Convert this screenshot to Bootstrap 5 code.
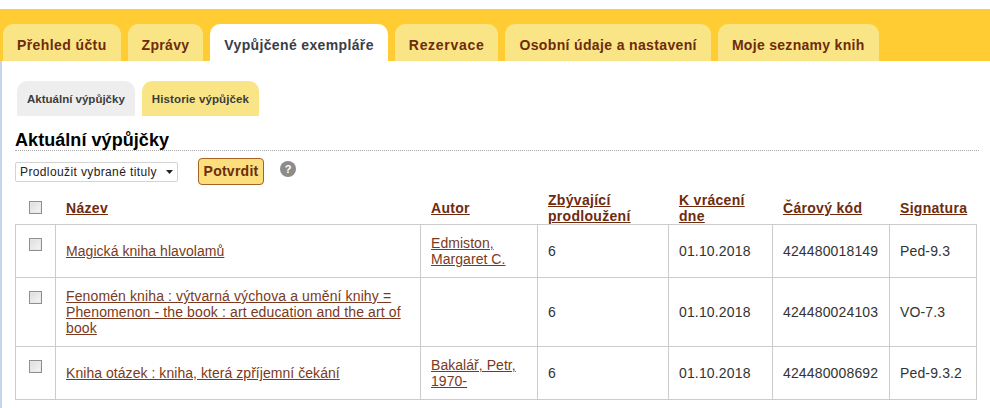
<!DOCTYPE html>
<html lang="cs">
<head>
  <meta charset="UTF-8" />
  <title>Aktuální výpůjčky</title>
  <meta name="viewport" content="width=device-width, initial-scale=1" />
  <link href="https://cdn.jsdelivr.net/npm/bootstrap@5.3.2/dist/css/bootstrap.min.css" rel="stylesheet" />
  <style>
    body {
      background: #fff;
      font-family: "Liberation Sans", Arial, sans-serif;
      font-size: 14px;
      color: #333;
      overflow: hidden;
      height: 408px;
    }
    .page-wrap {
      margin-top: 9px;
      border-left: 2px solid #c5d5ea;
      height: 399px;
    }
    .top-band {
      background: #ffcc33;
      height: 52px;
      margin-left: -2px;
      padding: 15px 0 0 3px;
      gap: 7px;
    }
    .top-band .nav-link {
      height: 37px;
      padding: 0 14px;
      line-height: 43px;
      font-size: 14px;
      font-weight: 700;
      letter-spacing: .4px;
      color: #6e2b0d;
      background: #f9e586;
      border-radius: 10px 10px 0 0;
      white-space: nowrap;
    }
    .top-band .nav-item:nth-child(2) .nav-link { letter-spacing: .3px; }
    .top-band .nav-item:nth-child(3) .nav-link { letter-spacing: .36px; }
    .top-band .nav-item:nth-child(4) .nav-link { letter-spacing: .7px; }
    .top-band .nav-item:nth-child(5) .nav-link { letter-spacing: .36px; }
    .top-band .nav-item:nth-child(6) .nav-link { letter-spacing: .3px; }
    .top-band .nav-link.active { background: #fff; color: #3c3c46; }
    .sub-tabs {
      padding: 20px 0 0 15px;
      gap: 7px;
    }
    .sub-tabs .nav-link {
      height: 35px;
      padding: 0 10px;
      line-height: 36px;
      font-size: 11.5px;
      font-weight: 700;
      letter-spacing: .12px;
      color: #3c3c3c;
      background: #f9e586;
      border-radius: 10px 10px 0 0;
      white-space: nowrap;
    }
    .sub-tabs .nav-link.active { background: #eeeeee; letter-spacing: 0; }
    .section-title {
      margin: 14px 11px 0 13px;
      height: 21px;
      line-height: 20px;
      font-size: 18px;
      font-weight: 700;
      letter-spacing: .06px;
      color: #000;
      border-bottom: 1px dotted #aaa;
    }
    .action-row { margin: 7px 0 0 13px; height: 28px; }
    .action-select {
      width: 163px;
      height: 20px;
      padding: 0 0 0 4px;
      margin-top: 4px;
      font-family: "Liberation Sans", Arial, sans-serif;
      font-size: 12px;
      letter-spacing: .38px;
      color: #222;
      border: 1px solid #d4d4d4;
      border-radius: 2px;
      background: #fff url("data:image/svg+xml,%3Csvg xmlns='http://www.w3.org/2000/svg' width='7' height='4'%3E%3Cpath d='M0 0h7L3.5 4z' fill='%23222'/%3E%3C/svg%3E") no-repeat right 4px center;
      appearance: none;
    }
    .confirm-btn {
      width: 66px;
      height: 27px;
      margin-left: 20px;
      padding: 0;
      font-size: 14px;
      font-weight: 700;
      letter-spacing: .25px;
      color: #6e2b0d;
      background: #fbdf7c;
      border: 1px solid #a8621f;
      border-radius: 4px;
    }
    .help-icon {
      width: 16px;
      height: 16px;
      margin: 3px 0 0 16px;
      border-radius: 50%;
      background: #8c8c8c;
      color: #fff;
      font-size: 11px;
      font-weight: 700;
      line-height: 16px;
      text-align: center;
    }
    .loans-table {
      width: 961px;
      margin: 0 0 0 13px;
      table-layout: fixed;
      border-collapse: collapse;
      --bs-table-color: #333;
      --bs-table-bg: transparent;
    }
    .loans-table th, .loans-table td {
      padding: 0 10px;
      vertical-align: middle;
      line-height: 16px;
      letter-spacing: .15px;
    }
    .loans-table th {
      height: 38px;
      border: 0;
      border-bottom: 1px solid #ccc;
      font-size: 14px;
      letter-spacing: .3px;
      padding-top: 6px;
      padding-left: 10.5px;
    }
    .loans-table td { border: 1px solid #ccc; }
    .loans-table a { color: #6e2b0d; }
    .loans-table td a { color: #7a3a22; letter-spacing: .05px; }
    .loans-table .long-title a { letter-spacing: .12px; }
    .loans-table .check-cell { padding: 0 0 0 13px; vertical-align: top; }
    .loans-table th.check-cell { padding-top: 15px; padding-left: 13px; }
    .loans-table td.check-cell { padding-top: 13px; }
    .row-check {
      display: block;
      width: 13px;
      height: 13px;
      margin: 0;
      appearance: none;
      border: 1px solid #8f8f8f;
      background: linear-gradient(135deg, #dcdcdc, #f6f6f6);
      box-shadow: inset 0 0 0 1px #e8e8e8;
    }
    .w-check { width: 40px; }
    .w-title { width: 365px; }
    .w-author { width: 117px; }
    .w-left { width: 131px; }
    .w-due { width: 104px; }
    .w-code { width: 117px; }
    .w-sign { width: 87px; }
    .h-a { height: 53px; }
    .h-b { height: 69px; }
    .h-c { height: 53px; }
  </style>
</head>
<body>
  <div class="page-wrap">
    <ul class="nav top-band">
      <li class="nav-item"><a class="nav-link" href="#">Přehled účtu</a></li>
      <li class="nav-item"><a class="nav-link" href="#">Zprávy</a></li>
      <li class="nav-item"><a class="nav-link active" href="#">Vypůjčené exempláře</a></li>
      <li class="nav-item"><a class="nav-link" href="#">Rezervace</a></li>
      <li class="nav-item"><a class="nav-link" href="#">Osobní údaje a nastavení</a></li>
      <li class="nav-item"><a class="nav-link" href="#">Moje seznamy knih</a></li>
    </ul>

    <ul class="nav sub-tabs">
      <li class="nav-item"><a class="nav-link active" href="#">Aktuální výpůjčky</a></li>
      <li class="nav-item"><a class="nav-link" href="#">Historie výpůjček</a></li>
    </ul>

    <h2 class="section-title">Aktuální výpůjčky</h2>

    <div class="d-flex align-items-start action-row">
      <select class="action-select">
        <option>Prodloužit vybrané tituly</option>
      </select>
      <button type="button" class="confirm-btn">Potvrdit</button>
      <div class="help-icon">?</div>
    </div>

    <table class="table loans-table">
      <colgroup>
        <col class="w-check" /><col class="w-title" /><col class="w-author" /><col class="w-left" /><col class="w-due" /><col class="w-code" /><col class="w-sign" />
      </colgroup>
      <thead>
        <tr>
          <th class="check-cell"><input type="checkbox" class="row-check" /></th>
          <th><a href="#">Název</a></th>
          <th><a href="#">Autor</a></th>
          <th><a href="#">Zbývající prodloužení</a></th>
          <th><a href="#">K vrácení dne</a></th>
          <th><a href="#">Čárový kód</a></th>
          <th><a href="#">Signatura</a></th>
        </tr>
      </thead>
      <tbody>
        <tr class="h-a">
          <td class="check-cell"><input type="checkbox" class="row-check" /></td>
          <td><a href="#">Magická kniha hlavolamů</a></td>
          <td><a href="#">Edmiston, Margaret C.</a></td>
          <td>6</td>
          <td>01.10.2018</td>
          <td>424480018149</td>
          <td>Ped-9.3</td>
        </tr>
        <tr class="h-b">
          <td class="check-cell"><input type="checkbox" class="row-check" /></td>
          <td class="long-title"><a href="#">Fenomén kniha : výtvarná výchova a umění knihy = Phenomenon - the book : art education and the art of book</a></td>
          <td></td>
          <td>6</td>
          <td>01.10.2018</td>
          <td>424480024103</td>
          <td>VO-7.3</td>
        </tr>
        <tr class="h-c">
          <td class="check-cell"><input type="checkbox" class="row-check" /></td>
          <td><a href="#">Kniha otázek : kniha, která zpříjemní čekání</a></td>
          <td><a href="#">Bakalář, Petr, 1970-</a></td>
          <td>6</td>
          <td>01.10.2018</td>
          <td>424480008692</td>
          <td>Ped-9.3.2</td>
        </tr>
      </tbody>
    </table>
  </div>

  <script src="https://cdn.jsdelivr.net/npm/bootstrap@5.3.2/dist/js/bootstrap.bundle.min.js"></script>
</body>
</html>
